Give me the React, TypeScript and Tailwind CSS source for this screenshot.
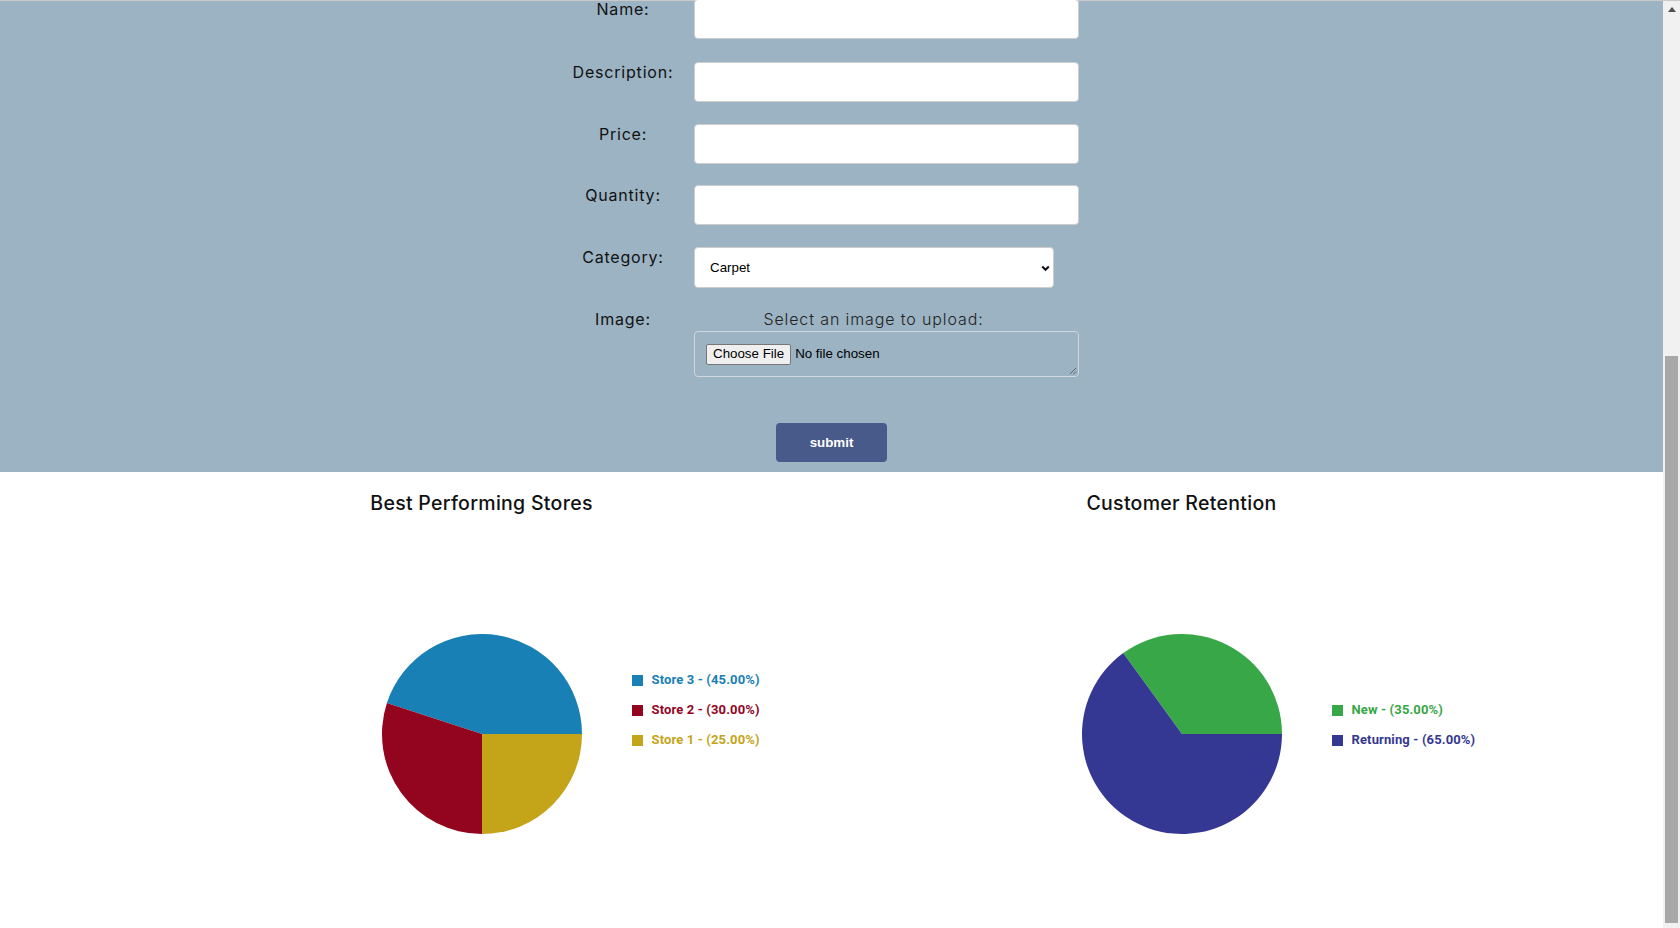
import React from "react";

type Slice = { label: string; value: number; color: string };

const storesData: Slice[] = [
  { label: "Store 3", value: 45, color: "#1880b5" },
  { label: "Store 2", value: 30, color: "#93041f" },
  { label: "Store 1", value: 25, color: "#c4a519" },
];

const retentionData: Slice[] = [
  { label: "New", value: 35, color: "#37a747" },
  { label: "Returning", value: 65, color: "#353893" },
];

// slice going counter-clockwise from 3 o'clock, like the chart lib does
const slicePath = (cx: number, cy: number, r: number, a0: number, a1: number) => {
  const rad = (a: number) => (a * Math.PI) / 180;
  const x0 = cx + r * Math.cos(rad(a0));
  const y0 = cy - r * Math.sin(rad(a0));
  const x1 = cx + r * Math.cos(rad(a1));
  const y1 = cy - r * Math.sin(rad(a1));
  const large = a1 - a0 > 180 ? 1 : 0;
  return `M${cx},${cy} L${x0},${y0} A${r},${r} 0 ${large} 0 ${x1},${y1} Z`;
};

const PieCard: React.FC<{ title: string; data: Slice[] }> = ({ title, data }) => {
  const total = data.reduce((s, d) => s + d.value, 0);
  let angle = 0;
  const slices = data.map((d) => {
    const start = angle;
    angle += (d.value / total) * 360;
    return { ...d, start, end: angle };
  });

  return (
    <div className="flex flex-col">
      <h3 className="mt-[17px] text-center text-[19.5px] leading-7 font-medium tracking-[0.015em] text-[#111] font-['Inter',sans-serif]">
        {title}
      </h3>
      <div className="mt-[117px] grid grid-cols-[1fr_200px_1fr] h-[200px]">
        <div />
        <svg width="200" height="200" viewBox="0 0 200 200">
          {slices.map((s) => (
            <path key={s.label} d={slicePath(100, 100, 100, s.start, s.end)} fill={s.color} />
          ))}
        </svg>
        <div className="self-end mb-[79px] pl-[50px] flex flex-col">
          {data.map((d) => (
            <div key={d.label} className="h-[30px] flex items-center gap-[9px]">
              <span className="w-[11px] h-[11px]" style={{ backgroundColor: d.color }} />
              <span
                className="text-[13px] font-bold tracking-[0.01em] font-['Roboto',sans-serif] whitespace-nowrap"
                style={{ color: d.color }}
              >
                {d.label} - ({d.value.toFixed(2)}%)
              </span>
            </div>
          ))}
        </div>
      </div>
    </div>
  );
};

const FieldRow: React.FC<{ label: string; className?: string; children: React.ReactNode }> = ({
  label,
  className = "",
  children,
}) => (
  <div className={`flex items-start gap-4 ${className}`}>
    <label className="w-[110px] shrink-0 text-center text-[16px] leading-5 tracking-[0.05em] text-[#111]">
      {label}
    </label>
    {children}
  </div>
);

const inputCls = "w-[385px] h-[40px] bg-white border border-[#cdcdcd] rounded-[4px]";

export default function App() {
  return (
    <div className="h-[928px] overflow-hidden flex flex-col bg-white">
      <div className="h-px bg-[#c9c9c9]" />
      <div className="flex-1 flex min-h-0">
        {/* page */}
        <div className="flex-1 min-w-0">
          <section className="bg-[#9bb3c3] pb-[10px] font-['Inter',sans-serif]">
            <form className="w-[527px] mx-auto flex flex-col" onSubmit={(e) => e.preventDefault()}>
              <FieldRow label="Name:" className="-mt-[2px]">
                <input className={inputCls} />
              </FieldRow>
              <FieldRow label="Description:" className="mt-[23px]">
                <input className={inputCls} />
              </FieldRow>
              <FieldRow label="Price:" className="mt-[22px]">
                <input className={inputCls} />
              </FieldRow>
              <FieldRow label="Quantity:" className="mt-[21px]">
                <input className={inputCls} />
              </FieldRow>
              <FieldRow label="Category:" className="mt-[22px]">
                <div className="relative w-[360px] h-[41px] bg-white border border-[#cdcdcd] rounded-[4px] flex items-center pl-[15px]">
                  <span className="text-[13.33px] text-black font-['Liberation_Sans',Arial,sans-serif]">Carpet</span>
                  <svg
                    className="absolute right-[3px] top-[17px]"
                    width="9"
                    height="7"
                    viewBox="0 0 9 7"
                  >
                    <path d="M1.2 1.5 L4.5 4.8 L7.8 1.5" fill="none" stroke="#111" strokeWidth="2" />
                  </svg>
                </div>
              </FieldRow>
              <FieldRow label="Image:" className="mt-[21px]">
                <div className="flex flex-col">
                  <p className="w-[359px] text-center text-[16px] leading-5 font-light tracking-[0.055em] text-[#222]">
                    Select an image to upload:
                  </p>
                  <div className="relative mt-[2px] w-[385px] h-[46px] border border-[#cfd6dc] rounded-[4px] flex items-center pl-[11px] gap-[4px] font-['Liberation_Sans',Arial,sans-serif] text-[13.33px] text-black">
                    <span className="h-[21px] px-[6px] flex items-center bg-[#efefef] border border-[#767676] rounded-[2px]">
                      Choose File
                    </span>
                    <span>No file chosen</span>
                    <svg className="absolute right-[1px] bottom-[1px]" width="8" height="8" viewBox="0 0 8 8">
                      <path d="M7 1 L1 7 M7 4.5 L4.5 7" stroke="#5f6b73" strokeWidth="1" />
                    </svg>
                  </div>
                </div>
              </FieldRow>
            </form>
            <div className="mt-[46px] flex justify-center">
              <button className="w-[111px] h-[39px] rounded-[4px] bg-[#475a89] text-white text-[13.33px] font-bold font-['Liberation_Sans',Arial,sans-serif]">
                submit
              </button>
            </div>
          </section>

          <section className="max-w-[1400px] mx-auto grid grid-cols-2">
            <PieCard title="Best Performing Stores" data={storesData} />
            <PieCard title="Customer Retention" data={retentionData} />
          </section>
        </div>

        {/* scrollbar */}
        <div className="w-[17px] shrink-0 bg-[#f1f1f1] flex flex-col items-center">
          <svg className="mt-[6px]" width="8" height="5" viewBox="0 0 8 5">
            <path d="M0 5 L4 0 L8 5 Z" fill="#505050" />
          </svg>
          <div className="mt-[344px] w-[13px] h-[567px] bg-[#a8a8a8]" />
        </div>
      </div>
    </div>
  );
}
